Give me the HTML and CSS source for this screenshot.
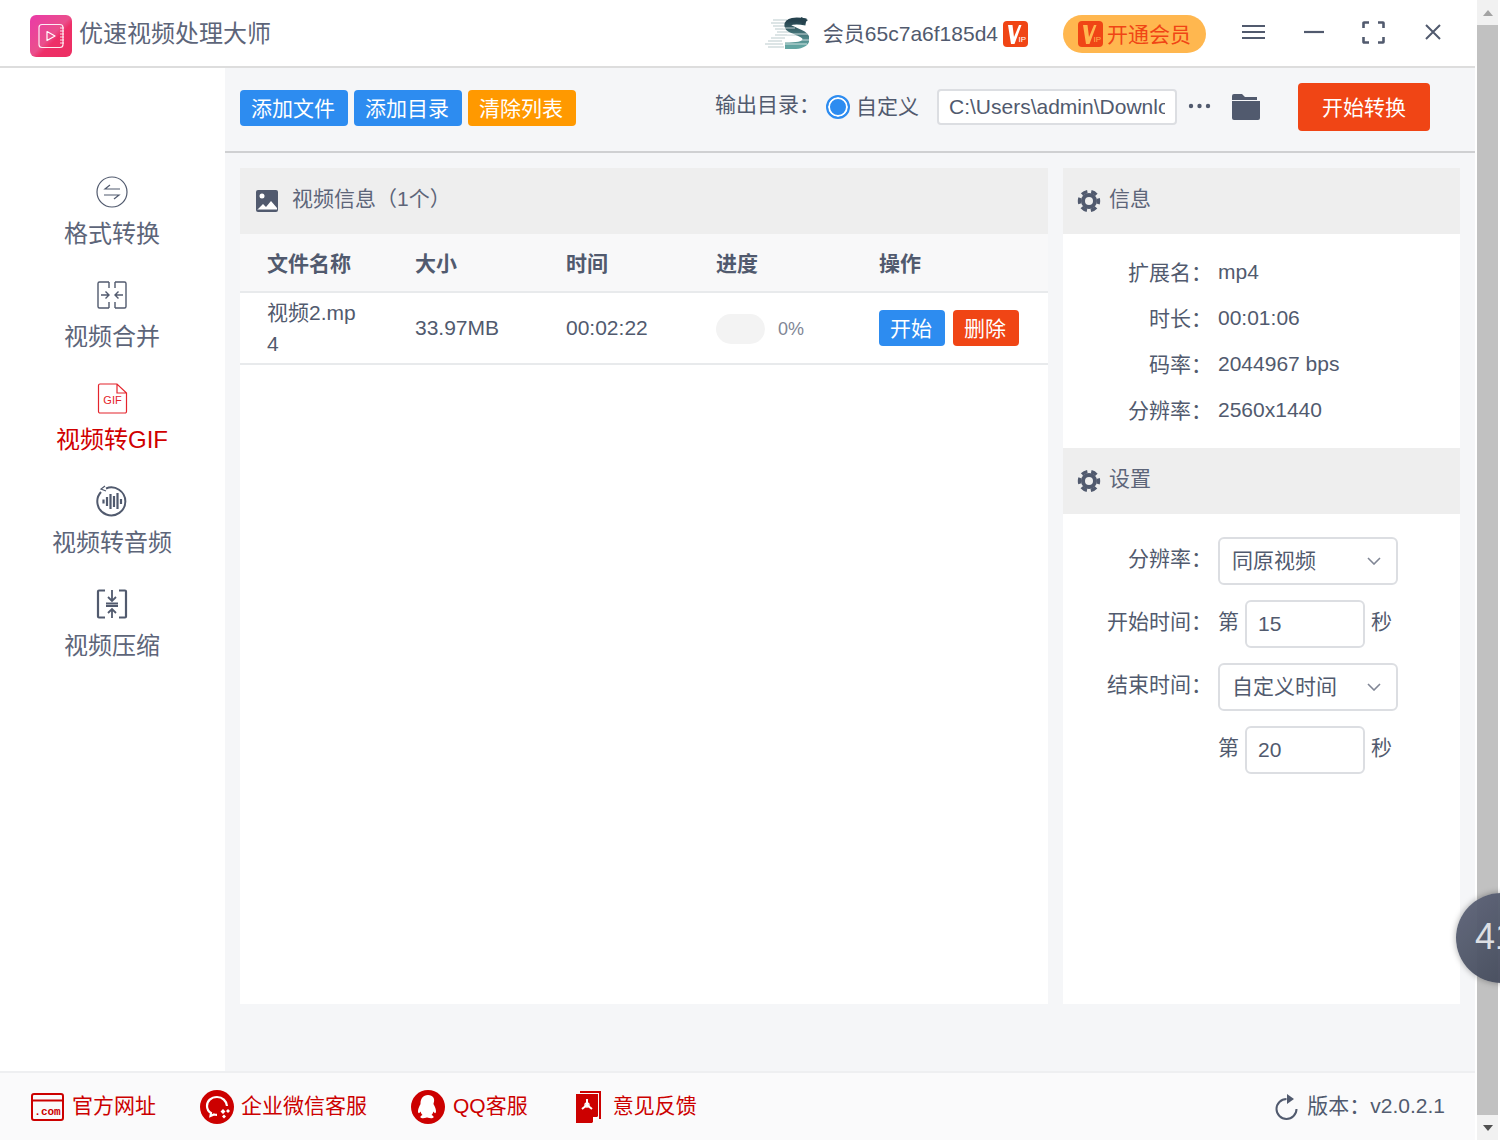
FILE: index.html
```html
<!DOCTYPE html>
<html lang="zh-CN">
<head>
  <meta charset="UTF-8">
  <meta name="viewport" content="width=device-width, initial-scale=1.0">
  <title>优速视频处理大师</title>
  <link rel="stylesheet" href="styles.css">
</head>
<body>
  <svg class="defs" width="0" height="0">
    <symbol id="gear" viewBox="0 0 24 24">
      <circle cx="12" cy="12" r="8" fill="#515a6e"/>
      <circle cx="12" cy="12" r="9.5" fill="none" stroke="#515a6e" stroke-width="3.4" stroke-dasharray="6 3.95" stroke-dashoffset="3"/>
      <circle cx="12" cy="12" r="4" fill="#eee"/>
    </symbol>
  </svg>

  <div class="window">
    <div class="app">
      <!-- top bar -->
      <header class="topbar">
        <svg class="logo" width="42" height="42" viewBox="0 0 42 42">
          <defs>
            <linearGradient id="logoBg" x1="0" y1="0" x2="1" y2="1">
              <stop offset="0" stop-color="#ea3aa8"/>
              <stop offset="0.5" stop-color="#ea4f8c"/>
              <stop offset="0.6" stop-color="#ee2f68"/>
              <stop offset="1" stop-color="#ec2f62"/>
            </linearGradient>
          </defs>
          <rect width="42" height="42" rx="6" fill="url(#logoBg)"/>
          <rect x="9" y="9.5" width="24" height="23" rx="3" fill="none" stroke="#fff" stroke-opacity=".9" stroke-width="1.2"/>
          <path d="M17 16.5l8 4.5-8 4.5z" fill="none" stroke="#fff" stroke-width="1.2" stroke-linejoin="round"/>
          <path d="M30 13h4M30 16h4M30 19h4M30 22h4M30 25h4M30 28h4" stroke="#fff" stroke-opacity=".85" stroke-width="1"/>
        </svg>
        <div class="app-title">优速视频处理大师</div>

        <div class="user">
          <svg class="user-logo" width="44" height="32" viewBox="0 0 44 32">
            <defs>
              <linearGradient id="sGrad" x1="0" y1="0" x2="0" y2="1">
                <stop offset="0" stop-color="#25424e"/>
                <stop offset="1" stop-color="#62a5a2"/>
              </linearGradient>
            </defs>
            <path d="M8 3h14M6 6h14M8 9h16M10 12h18M12 15h20M10 18h22M6 21h14M3 24h14M0 27h18M3 30h16" stroke="#9fb6b8" stroke-opacity=".7" stroke-width="1.2"/>
            <path d="M41 5C30 3 22 4 23 9c1 5 18 6 18 13 0 6-9 7-21 7" fill="none" stroke="url(#sGrad)" stroke-width="7"/>
            <path d="M36 0l7 3-6 5z" fill="#25424e"/>
            <path d="M18 11h12M22 17h22M20 23h24M18 27h24" stroke="#fff" stroke-opacity=".7"/>
          </svg>
          <span class="user-name">会员65c7a6f185d4</span>
          <svg class="user-vip" width="25" height="26" viewBox="0 0 25 26">
            <rect width="25" height="26" rx="4" fill="#f04515"/>
            <path d="M5 4h4.500l1.500 12 5-12h2.500l-7 19H8z" fill="#fff"/>
            <text x="15.500" y="21" font-size="8" fill="#fff" font-family="Liberation Sans">IP</text>
          </svg>
        </div>

        <div class="vip-btn">
          <svg width="25" height="26" viewBox="0 0 25 26">
            <rect width="25" height="26" rx="4" fill="#f04515"/>
            <path d="M5 4h4.500l1.500 12 5-12h2.500l-7 19H8z" fill="#ffb74f"/>
            <text x="15.500" y="21" font-size="8" fill="#ffb74f" font-family="Liberation Sans">IP</text>
          </svg>
          <span>开通会员</span>
        </div>

        <svg class="win-btn menu-btn" width="23" height="16" viewBox="0 0 23 16">
          <path d="M0 2h23M0 8h23M0 14h23" stroke="#515a6e" stroke-width="2.2"/>
        </svg>
        <svg class="win-btn min-btn" width="20" height="4" viewBox="0 0 20 4">
          <path d="M0 2h20" stroke="#515a6e" stroke-width="2.2"/>
        </svg>
        <svg class="win-btn full-btn" width="23" height="23" viewBox="0 0 23 23">
          <path d="M1.5 7V2a.5.5 0 0 1 .5-.5h5M16 1.5h5a.5.5 0 0 1 .5.5v5M21.5 16v5a.5.5 0 0 1-.5.5h-5M7 21.5H2a.5.5 0 0 1-.5-.5v-5" fill="none" stroke="#515a6e" stroke-width="2.6"/>
        </svg>
        <svg class="win-btn close-btn" width="16" height="16" viewBox="0 0 16 16">
          <path d="M1 1l14 14M15 1L1 15" stroke="#515a6e" stroke-width="2"/>
        </svg>
      </header>

      <div class="middle">
        <!-- left menu -->
        <nav class="sidebar">
          <a class="nav-item">
            <svg width="32" height="32" viewBox="0 0 32 32" fill="none" stroke="#515a6e" stroke-width="1.2">
              <circle cx="16" cy="16" r="15"/>
              <path d="M24 13H9l5-4M8 19h15l-5 4"/>
            </svg>
            <span>格式转换</span>
          </a>
          <a class="nav-item">
            <svg width="32" height="32" viewBox="0 0 32 32" fill="none" stroke="#515a6e" stroke-width="1.4">
              <path d="M13 3H3.500A1.500 1.500 0 0 0 2 4.500v23A1.500 1.500 0 0 0 3.500 29H13M19 3h9.500A1.500 1.500 0 0 1 30 4.500v23a1.500 1.500 0 0 1-1.500 1.500H19"/>
              <path d="M13 3v6M13 23v6M19 3v6M19 23v6"/>
              <path d="M5 16h8M9.500 12.500l3.500 3.500-3.500 3.500M27 16h-8M22.500 12.500L19 16l3.500 3.500"/>
            </svg>
            <span>视频合并</span>
          </a>
          <a class="nav-item active">
            <svg width="32" height="32" viewBox="0 0 32 32" fill="none" stroke="#e4242c" stroke-width="1.2">
              <path d="M21 2H4a1.500 1.500 0 0 0-1.500 1.500v26A1.500 1.500 0 0 0 4 31h25a1.500 1.500 0 0 0 1.500-1.500V11zM21 2v9h9.500"/>
              <text x="16.500" y="22" text-anchor="middle" font-size="11" fill="#e4242c" stroke="none" font-family="Liberation Sans">GIF</text>
            </svg>
            <span>视频转GIF</span>
          </a>
          <a class="nav-item">
            <svg width="32" height="32" viewBox="0 0 32 32" fill="none" stroke="#515a6e">
              <path d="M10 3.500A14 14 0 1 1 5 7" stroke-width="2"/>
              <path d="M9 1l-4 3 5 2" stroke-width="1.200"/>
              <path d="M7.500 14.500v4M11 12v9M14.500 9v15M18 11v11M21.500 8v16M25 14v5" stroke-width="2.200"/>
            </svg>
            <span>视频转音频</span>
          </a>
          <a class="nav-item">
            <svg width="32" height="32" viewBox="0 0 32 32" fill="none" stroke="#515a6e">
              <path d="M9 2.500H3a1 1 0 0 0-1 1v25a1 1 0 0 0 1 1h6M23 2.500h6a1 1 0 0 1 1 1v25a1 1 0 0 1-1 1h-6" stroke-width="2.200"/>
              <path d="M10 15.500h12M10 18h12M16 2v11M12 9l4 4 4-4M16 30V21M12 25l4-4 4 4" stroke-width="1.800"/>
            </svg>
            <span>视频压缩</span>
          </a>
        </nav>

        <main class="content">
          <div class="toolbar">
            <div class="tool-btns">
              <button class="btn btn-blue">添加文件</button>
              <button class="btn btn-blue">添加目录</button>
              <button class="btn btn-orange">清除列表</button>
            </div>
            <div class="output-label">输出目录：</div>
            <span class="radio"></span>
            <span class="radio-text">自定义</span>
            <input class="path-input" type="text" value="C:\Users\admin\Downloads">
            <svg class="more-dots" width="23" height="6" viewBox="0 0 23 6" fill="#515a6e">
              <circle cx="3" cy="3" r="2.200"/><circle cx="11.500" cy="3" r="2.200"/><circle cx="20" cy="3" r="2.200"/>
            </svg>
            <svg class="folder" width="28" height="26" viewBox="0 0 28 26" fill="#515a6e">
              <path d="M2 0h8l3 3h12v3H0V2a2 2 0 0 1 2-2z"/>
              <path d="M0 7h28v17a2 2 0 0 1-2 2H2a2 2 0 0 1-2-2z"/>
            </svg>
            <button class="start-btn">开始转换</button>
          </div>

          <div class="panels">
            <section class="panel-list">
              <div class="panel-head">
                <svg width="22" height="22" viewBox="0 0 22 22">
                  <rect width="22" height="22" rx="2" fill="#515a6e"/>
                  <circle cx="6" cy="6" r="2.500" fill="#fff"/>
                  <path d="M1 20l6-6 3 3 5-6 6 7v1.500H1z" fill="#fff"/>
                </svg>
                <span>视频信息（1个）</span>
              </div>
              <table class="file-table">
                <colgroup>
                  <col class="c1"><col class="c2"><col class="c3"><col class="c4"><col class="c5">
                </colgroup>
                <thead>
                  <tr><th>文件名称</th><th>大小</th><th>时间</th><th>进度</th><th>操作</th></tr>
                </thead>
                <tbody>
                  <tr>
                    <td class="name-cell">视频2.mp4</td>
                    <td>33.97MB</td>
                    <td>00:02:22</td>
                    <td>
                      <div class="progress">
                        <div class="progress-bar"></div>
                        <span class="progress-text">0%</span>
                      </div>
                    </td>
                    <td>
                      <div class="row-btns">
                        <button class="btn-small btn-blue">开始</button>
                        <button class="btn-small btn-red">删除</button>
                      </div>
                    </td>
                  </tr>
                </tbody>
              </table>
            </section>

            <aside class="panel-side">
              <div class="panel-head">
                <svg class="gear" width="24" height="24"><use href="#gear"/></svg>
                <span>信息</span>
              </div>
              <div class="info-list">
                <div class="info-row"><span class="field-label">扩展名：</span><span>mp4</span></div>
                <div class="info-row"><span class="field-label">时长：</span><span>00:01:06</span></div>
                <div class="info-row"><span class="field-label">码率：</span><span>2044967 bps</span></div>
                <div class="info-row"><span class="field-label">分辨率：</span><span>2560x1440</span></div>
              </div>
              <div class="panel-head">
                <svg class="gear" width="24" height="24"><use href="#gear"/></svg>
                <span>设置</span>
              </div>
              <div class="settings">
                <div class="form-row">
                  <span class="field-label">分辨率：</span>
                  <div class="select">同原视频
                    <svg width="14" height="8" viewBox="0 0 14 8"><path d="M1 1l6 6 6-6" fill="none" stroke="#808695" stroke-width="1.600"/></svg>
                  </div>
                </div>
                <div class="form-row">
                  <span class="field-label">开始时间：</span>
                  <span class="unit">第</span>
                  <input class="num-input" type="text" value="15">
                  <span class="unit">秒</span>
                </div>
                <div class="form-row">
                  <span class="field-label">结束时间：</span>
                  <div class="select">自定义时间
                    <svg width="14" height="8" viewBox="0 0 14 8"><path d="M1 1l6 6 6-6" fill="none" stroke="#808695" stroke-width="1.600"/></svg>
                  </div>
                </div>
                <div class="form-row">
                  <span class="field-label"></span>
                  <span class="unit">第</span>
                  <input class="num-input" type="text" value="20">
                  <span class="unit">秒</span>
                </div>
              </div>
            </aside>
          </div>
        </main>
      </div>

      <footer class="footer">
        <a class="foot-link link-site">
          <svg width="33" height="28" viewBox="0 0 33 28">
            <rect x="1" y="1" width="31" height="26" rx="2" fill="none" stroke="#c00" stroke-width="2"/>
            <path d="M1 7.500h31" stroke="#c00" stroke-width="2"/>
            <text x="16.500" y="22" text-anchor="middle" font-size="11" font-weight="bold" fill="#c00" font-family="Liberation Mono">.com</text>
          </svg>
          <span>官方网址</span>
        </a>
        <a class="foot-link link-wechat">
          <svg width="34" height="34" viewBox="0 0 34 34">
            <circle cx="17" cy="17" r="17" fill="#c00"/>
            <path d="M17 7c-6 0-10 4-10 9 0 3 1.500 5.500 4 7l-.5 3 3.500-1.500c1 .3 2 .4 3 .4" fill="none" stroke="#fff" stroke-width="2.200"/>
            <path d="M27 16c-.5-5-4.500-9-10-9" fill="none" stroke="#fff" stroke-width="2.200"/>
            <path d="M23 19l2.500 2.500L23 24l-2.500-2.500zM28 19l2 2-2 2-2-2zM24 24.500l2 2-2 2-2-2z" fill="#fff"/>
          </svg>
          <span>企业微信客服</span>
        </a>
        <a class="foot-link link-qq">
          <svg width="34" height="34" viewBox="0 0 34 34">
            <circle cx="17" cy="17" r="17" fill="#c00"/>
            <path d="M17 5c-5 0-7.500 4-7.500 8.500 0 1-.5 1.500-1 2.500-1.500 3-2 6-1 7 .7.500 1.500-.5 2-1.500.5 1.500 1 2.500 2 3.500-1.500.7-2.500 1.500-2 2.500.7 1 3.500 1 5.500.3.700-.3 1.300-.3 2 0 2 .7 5 .7 5.500-.3.500-1-.5-1.800-2-2.500 1-1 1.500-2 2-3.500.5 1 1.300 2 2 1.500 1-1 .5-4-1-7-.5-1-1-1.500-1-2.500C24.500 9 22 5 17 5z" fill="#fff"/>
          </svg>
          <span>QQ客服</span>
        </a>
        <a class="foot-link link-feedback">
          <svg width="25" height="32" viewBox="0 0 25 32">
            <path d="M4 0h21v28h-2V2H4z" fill="#c00"/>
            <path d="M0 3h22v22l-6 7H0z" fill="#c00"/>
            <path d="M17 32v-6h5z" fill="#fff"/>
            <path d="M11 8v6M11 14l-5 4M11 14l5 4" stroke="#fff" stroke-width="2" fill="none"/>
            <circle cx="11" cy="14" r="2" fill="none" stroke="#fff" stroke-width="1.400"/>
          </svg>
          <span>意见反馈</span>
        </a>
        <div class="version">
          <svg width="23" height="26" viewBox="0 0 23 26">
            <path d="M11.500 5A10 10 0 1 0 21.500 15" fill="none" stroke="#515a6e" stroke-width="2"/>
            <path d="M12 0l7 5-7 5z" fill="#515a6e"/>
          </svg>
          <span>版本：v2.0.2.1</span>
        </div>
      </footer>
    </div>

    <!-- browser scrollbar -->
    <div class="scrollbar">
      <div class="scroll-arrow"><i class="arrow-up"></i></div>
      <div class="scroll-thumb"></div>
      <div class="scroll-arrow"><i class="arrow-down"></i></div>
    </div>
  </div>

  <div class="float-ball">41</div>
</body>
</html>
```

FILE: styles.css
```css
* {
  box-sizing: border-box;
}
html,
body {
  margin: 0;
  height: 1140px;
  overflow: hidden;
}
body {
  font-family: "Liberation Sans", "Noto Sans CJK SC", sans-serif;
  font-size: 21px;
  color: #515a6e;
  background-color: #fff;
}
button,
input {
  font-family: inherit;
  font-size: 21px;
}
.defs {
  position: absolute;
}
.window {
  display: flex;
  height: 1140px;
}
.app {
  width: 1475px;
  display: flex;
  flex-direction: column;
}

/* top bar */
.topbar {
  height: 68px;
  padding-left: 30px;
  display: flex;
  align-items: center;
  border-bottom: 2px solid #ddd;
  background-color: #fff;
}
.logo {
  margin-top: 6px;
}
.app-title {
  margin-left: 7px;
  margin-bottom: 4px;
  font-size: 24px;
  color: #5d6579;
}
.user {
  margin-left: auto;
  display: flex;
  align-items: center;
}
.user-name {
  margin-left: 14px;
  margin-bottom: 2px;
}
.user-vip {
  margin-left: 5px;
  margin-top: 2px;
}
.vip-btn {
  width: 143px;
  height: 38px;
  margin-left: 35px;
  margin-top: 2px;
  padding-left: 15px;
  display: flex;
  align-items: center;
  gap: 4px;
  border-radius: 19px;
  background-color: #ffb74f;
  color: #f04515;
}
.vip-btn span {
  margin-bottom: 2px;
}
.win-btn {
  flex: none;
}
.menu-btn {
  margin-left: 36px;
  margin-bottom: 2px;
}
.min-btn {
  margin-left: 39px;
  margin-bottom: 2px;
}
.full-btn {
  margin-left: 38px;
  margin-bottom: 2px;
}
.close-btn {
  margin-left: 40px;
  margin-right: 34px;
  margin-bottom: 2px;
}

.middle {
  flex: 1;
  display: flex;
  min-height: 0;
}

/* left menu */
.sidebar {
  width: 225px;
  padding: 108px 1px 0 0;
  background-color: #fff;
  display: flex;
  flex-direction: column;
  gap: 28px;
}
.nav-item {
  display: flex;
  flex-direction: column;
  align-items: center;
  gap: 9px;
  font-size: 24px;
  line-height: 34px;
  color: #5d6579;
}
.nav-item.active {
  color: #d00000;
}

.content {
  flex: 1;
  background-color: #f5f6f8;
}
.toolbar {
  height: 85px;
  padding: 0 45px 5px 15px;
  display: flex;
  align-items: center;
  border-bottom: 2px solid #cfd0d2;
}
.tool-btns {
  display: flex;
  gap: 6px;
  margin-top: 2px;
}
.btn {
  width: 108px;
  height: 36px;
  padding: 0 2px 3px 0;
  border: none;
  border-radius: 4px;
  color: #fff;
}
.btn-blue {
  background-color: #2d8cf0;
}
.btn-orange {
  background-color: #ff9900;
}
.btn-red {
  background-color: #f04515;
}
.output-label {
  margin-left: 139px;
  margin-top: -8px;
  width: 111px;
  flex: none;
}
.radio {
  flex: none;
  width: 24px;
  height: 24px;
  border: 2px solid #2d8cf0;
  border-radius: 50%;
  background-color: #2d8cf0;
  box-shadow: inset 0 0 0 2px #fff;
}
.radio-text {
  flex: none;
  width: 62px;
  margin-left: 6px;
  margin-right: 1px;
  margin-bottom: 4px;
  white-space: nowrap;
}
.path-input {
  flex: none;
  width: 240px;
  height: 36px;
  margin-left: 18px;
  padding: 0 10px;
  border: 2px solid #dcdee2;
  border-radius: 4px;
  color: #515a6e;
  background-color: #fff;
}
.more-dots {
  flex: none;
  margin-left: 11px;
  margin-top: -2px;
}
.folder {
  flex: none;
  margin-left: 21px;
}
.start-btn {
  flex: none;
  width: 132px;
  height: 48px;
  margin-left: 38px;
  padding: 0 0 3px 0;
  border: none;
  border-radius: 4px;
  background-color: #f04515;
  color: #fff;
}

.panels {
  display: flex;
  gap: 15px;
  height: 836px;
  margin: 15px 15px 0;
}
.panel-list {
  width: 808px;
  background-color: #fff;
}
.panel-side {
  width: 397px;
  background-color: #fff;
}
.panel-head {
  height: 66px;
  padding: 0 0 8px 16px;
  display: flex;
  align-items: center;
  gap: 14px;
  background-color: #eee;
  color: #5d6579;
}
.panel-head svg {
  margin-top: 8px;
}
.panel-side .panel-head {
  gap: 8px;
  padding-left: 14px;
}

/* file table */
.file-table {
  width: 100%;
  table-layout: fixed;
  border-collapse: collapse;
}
.c1 { width: 148px; }
.c2 { width: 151px; }
.c3 { width: 150px; }
.c4 { width: 163px; }
.file-table th {
  height: 58px;
  padding: 0 0 1px 27px;
  text-align: left;
  font-weight: bold;
  background-color: #f8f8f9;
  border-bottom: 2px solid #e8eaec;
}
.file-table td {
  height: 72px;
  padding: 0 0 0 27px;
  border-bottom: 2px solid #e8eaec;
}
.name-cell {
  line-height: 31px;
  padding-right: 24px !important;
  word-break: break-all;
}
.progress {
  display: flex;
  align-items: center;
  gap: 13px;
  margin-top: 2px;
}
.progress-bar {
  width: 49px;
  height: 30px;
  border-radius: 15px;
  background-color: #f3f3f3;
}
.progress-text {
  font-size: 18px;
  color: #808695;
}
.row-btns {
  display: flex;
  gap: 8px;
}
.btn-small {
  width: 66px;
  height: 36px;
  padding: 0 2px 2px 0;
  border: none;
  border-radius: 4px;
  color: #fff;
}

/* info and settings */
.info-list {
  padding: 15px 0;
}
.info-row {
  height: 46px;
  display: flex;
  align-items: center;
}
.field-label {
  width: 149px;
  margin-right: 6px;
  flex: none;
  text-align: right;
}
.info-row .field-label {
  margin-bottom: 2px;
}
.settings {
  padding-top: 23px;
  display: flex;
  flex-direction: column;
  gap: 15px;
}
.form-row {
  height: 48px;
  display: flex;
  align-items: flex-start;
  line-height: 44px;
}
.select {
  width: 180px;
  height: 48px;
  padding: 0 15px 0 12px;
  display: flex;
  align-items: center;
  justify-content: space-between;
  border: 2px solid #dcdee2;
  border-radius: 6px;
}
.num-input {
  width: 120px;
  height: 48px;
  margin: 0 6px;
  padding: 0 11px;
  border: 2px solid #dcdee2;
  border-radius: 6px;
  color: #515a6e;
}

/* footer */
.footer {
  height: 69px;
  display: flex;
  align-items: center;
  border-top: 2px solid #eeeff1;
  background-color: #fafafb;
}
.foot-link {
  display: flex;
  align-items: center;
  color: #cc0000;
}
.foot-link span,
.version span {
  margin-bottom: 5px;
}
.link-site {
  margin-left: 31px;
  gap: 8px;
}
.link-wechat {
  margin-left: 44px;
  gap: 7px;
}
.link-qq {
  margin-left: 44px;
  gap: 8px;
}
.link-feedback {
  margin-left: 48px;
  gap: 12px;
}
.version {
  margin-left: auto;
  margin-right: 30px;
  display: flex;
  align-items: center;
  gap: 9px;
}

/* scrollbar */
.scrollbar {
  width: 25px;
  padding: 0 2px;
  display: flex;
  flex-direction: column;
  background-color: #fff;
}
.scroll-arrow {
  height: 25px;
  display: flex;
  align-items: center;
  justify-content: center;
  background-color: #f1f1f1;
}
.scroll-thumb {
  flex: 1;
  background-color: #c1c1c1;
}
.arrow-up,
.arrow-down {
  width: 0;
  height: 0;
  border-left: 5px solid transparent;
  border-right: 5px solid transparent;
}
.arrow-up {
  border-bottom: 6px solid #a3a3a3;
}
.arrow-down {
  border-top: 6px solid #505050;
}

.float-ball {
  position: absolute;
  left: 1456px;
  top: 893px;
  width: 90px;
  height: 90px;
  padding-left: 19px;
  border-radius: 50%;
  background: linear-gradient(135deg, #5e6579, #3f4555);
  box-shadow: 0 0 6px rgba(0, 0, 0, 0.35);
  color: #dfe1e6;
  font-size: 36px;
  line-height: 88px;
  opacity: 0.96;
}
```
